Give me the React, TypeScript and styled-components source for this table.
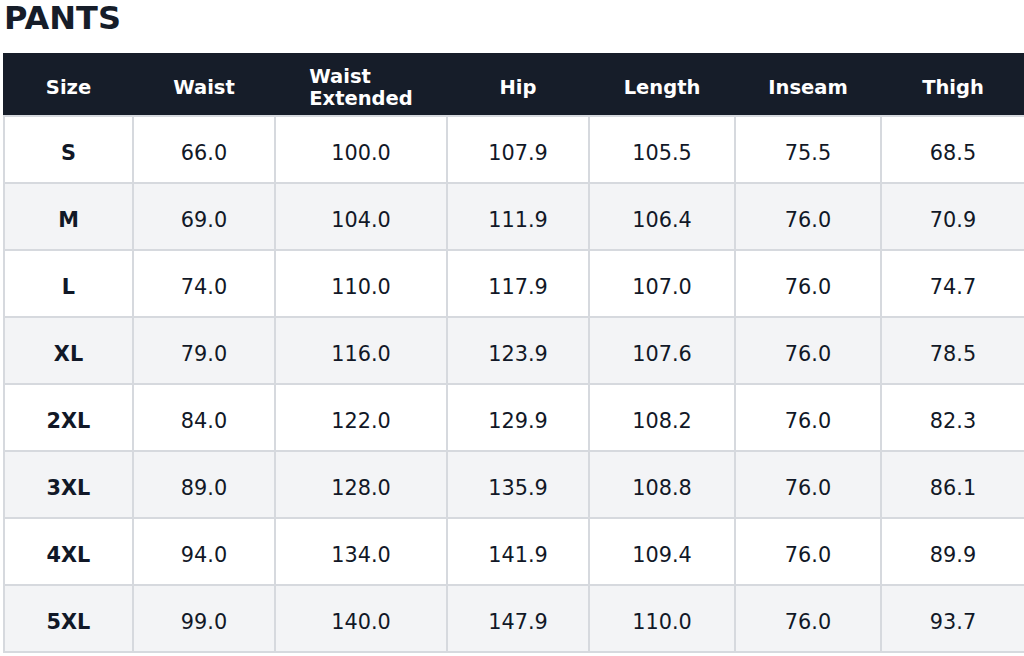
import React from "react";
import styled, { createGlobalStyle } from "styled-components";

const Global = createGlobalStyle`
  html, body { margin: 0; padding: 0; background: #ffffff; }
  body { font-family: "DejaVu Sans", "Liberation Sans", sans-serif; color: #111827; }
`;

const Page = styled.div`
  padding: 0 0 0 3px;
  width: 1021px;
`;

const Title = styled.h1`
  margin: 0 0 0 1px;
  font-size: 32px;
  line-height: 36px;
  font-weight: 700;
  color: #161d29;
  padding-bottom: 17px;
`;

const Table = styled.table`
  border-collapse: collapse;
  width: 1021px;
  table-layout: fixed;
`;

const HeadCell = styled.th`
  background: #161d29;
  color: #ffffff;
  font-size: 19.5px;
  font-weight: 700;
  height: 54px;
  padding: 6px 6px 0;
  border: 2px solid #161d29;
  border-bottom-color: #d6d9de;
  line-height: 22px;
`;

const HeadInner = styled.div`
  display: flex;
  justify-content: center;
  align-items: center;
`;

const HeadLabel = styled.span`
  width: min-content;
  text-align: left;
`;

const Row = styled.tr<{ $alt: boolean }>`
  background: ${(p) => (p.$alt ? "#f3f4f6" : "#ffffff")};
`;

const Cell = styled.td<{ $bold?: boolean }>`
  border: 2px solid #d6d9de;
  height: 59px;
  padding: 6px 0 0;
  text-align: center;
  font-size: 20.8px;
  font-weight: ${(p) => (p.$bold ? 700 : 400)};
  color: #111827;
`;

const cols = [
  { label: "Size", w: 129 },
  { label: "Waist", w: 142 },
  { label: "Waist Extended", w: 172 },
  { label: "Hip", w: 142 },
  { label: "Length", w: 146 },
  { label: "Inseam", w: 146 },
  { label: "Thigh", w: 144 },
];

const rows = [
  ["S", "66.0", "100.0", "107.9", "105.5", "75.5", "68.5"],
  ["M", "69.0", "104.0", "111.9", "106.4", "76.0", "70.9"],
  ["L", "74.0", "110.0", "117.9", "107.0", "76.0", "74.7"],
  ["XL", "79.0", "116.0", "123.9", "107.6", "76.0", "78.5"],
  ["2XL", "84.0", "122.0", "129.9", "108.2", "76.0", "82.3"],
  ["3XL", "89.0", "128.0", "135.9", "108.8", "76.0", "86.1"],
  ["4XL", "94.0", "134.0", "141.9", "109.4", "76.0", "89.9"],
  ["5XL", "99.0", "140.0", "147.9", "110.0", "76.0", "93.7"],
];

export default function App() {
  return (
    <>
      <Global />
      <Page>
        <Title>PANTS</Title>
        <Table>
          <colgroup>
            {cols.map((c) => (
              <col key={c.label} style={{ width: c.w }} />
            ))}
          </colgroup>
          <thead>
            <tr>
              {cols.map((c) => (
                <HeadCell key={c.label}>
                  <HeadInner>
                    <HeadLabel>{c.label}</HeadLabel>
                  </HeadInner>
                </HeadCell>
              ))}
            </tr>
          </thead>
          <tbody>
            {rows.map((r, i) => (
              <Row key={r[0]} $alt={i % 2 === 1}>
                {r.map((v, j) => (
                  <Cell key={j} $bold={j === 0}>
                    {v}
                  </Cell>
                ))}
              </Row>
            ))}
          </tbody>
        </Table>
      </Page>
    </>
  );
}
